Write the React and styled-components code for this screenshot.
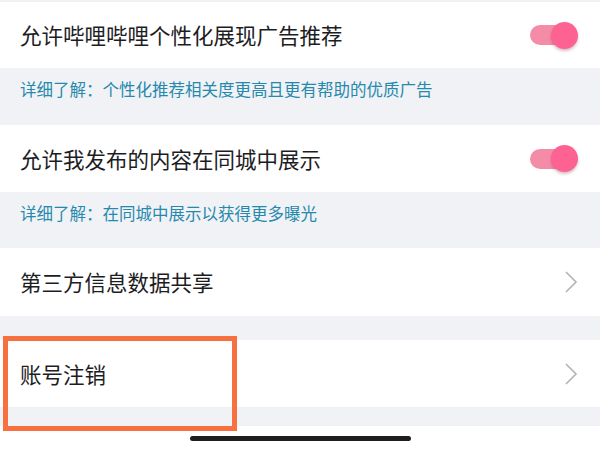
import React from 'react';
import styled, { createGlobalStyle } from 'styled-components';

const GlobalStyle = createGlobalStyle`
  html, body {
    margin: 0;
    padding: 0;
    background: #ffffff;
  }
  body {
    font-family: "Noto Sans CJK SC", "Noto Sans", sans-serif;
  }
`;

const Page = styled.div`
  width: 600px;
  height: 450px;
  overflow: hidden;
  display: flex;
  flex-direction: column;
  background: #f1f2f5;
  padding-top: 2px;
  box-sizing: border-box;
`;

const Row = styled.div`
  height: ${p => p.h || 67}px;
  flex-shrink: 0;
  background: #ffffff;
  display: flex;
  align-items: center;
  justify-content: space-between;
  padding: 0 22px 0 20px;
  box-sizing: border-box;
`;

const Label = styled.span`
  font-size: 21.5px;
  line-height: 1;
  color: #1d1d1f;
  letter-spacing: 0;
`;

const Note = styled.div`
  height: ${p => p.h}px;
  flex-shrink: 0;
  padding: 13px 0 0 20px;
  box-sizing: border-box;
  font-size: 16.5px;
  line-height: 17px;
  color: #2589ad;
`;

const Gap = styled.div`
  height: ${p => p.h}px;
  flex-shrink: 0;
`;

const Highlight = styled.div`
  position: relative;
`;

const Frame = styled.div`
  position: absolute;
  left: 3px;
  top: -4px;
  width: 234px;
  height: 95px;
  border: 5px solid #f7703f;
  box-sizing: border-box;
  pointer-events: none;
`;

const Switch = styled.div`
  position: relative;
  width: 48px;
  height: 27px;
  display: flex;
  align-items: center;
`;

const Track = styled.div`
  width: 42px;
  height: 20px;
  border-radius: 10px;
  background: #f48ca8;
`;

const Knob = styled.div`
  position: absolute;
  right: 0;
  top: 0;
  width: 27px;
  height: 27px;
  border-radius: 50%;
  background: #fd6292;
  box-shadow: 0 2px 3px rgba(120, 40, 60, 0.3);
`;

const Bottom = styled.div`
  flex: 1;
  background: #ffffff;
  display: flex;
  justify-content: center;
  padding-top: 10px;
`;

const HomeBar = styled.div`
  width: 221px;
  height: 5px;
  border-radius: 3px;
  background: #1e1e1e;
`;

function Toggle() {
  return (
    <Switch>
      <Track />
      <Knob />
    </Switch>
  );
}

function Chevron() {
  return (
    <svg width="14" height="24" viewBox="0 0 14 24">
      <path d="M2 2 L12 12 L2 22" fill="none" stroke="#b3b3b3" strokeWidth="1.6" />
    </svg>
  );
}

export default function App() {
  return (
    <>
      <GlobalStyle />
      <Page>
        <Row h={66}>
          <Label>允许哔哩哔哩个性化展现广告推荐</Label>
          <Toggle />
        </Row>
        <Note h={57}>详细了解：个性化推荐相关度更高且更有帮助的优质广告</Note>
        <Row>
          <Label>允许我发布的内容在同城中展示</Label>
          <Toggle />
        </Row>
        <Note h={56}>详细了解：在同城中展示以获得更多曝光</Note>
        <Row h={68}>
          <Label>第三方信息数据共享</Label>
          <Chevron />
        </Row>
        <Gap h={24} />
        <Highlight>
          <Row>
            <Label>账号注销</Label>
            <Chevron />
          </Row>
          <Gap h={19} />
          <Frame />
        </Highlight>
        <Bottom>
          <HomeBar />
        </Bottom>
      </Page>
    </>
  );
}
